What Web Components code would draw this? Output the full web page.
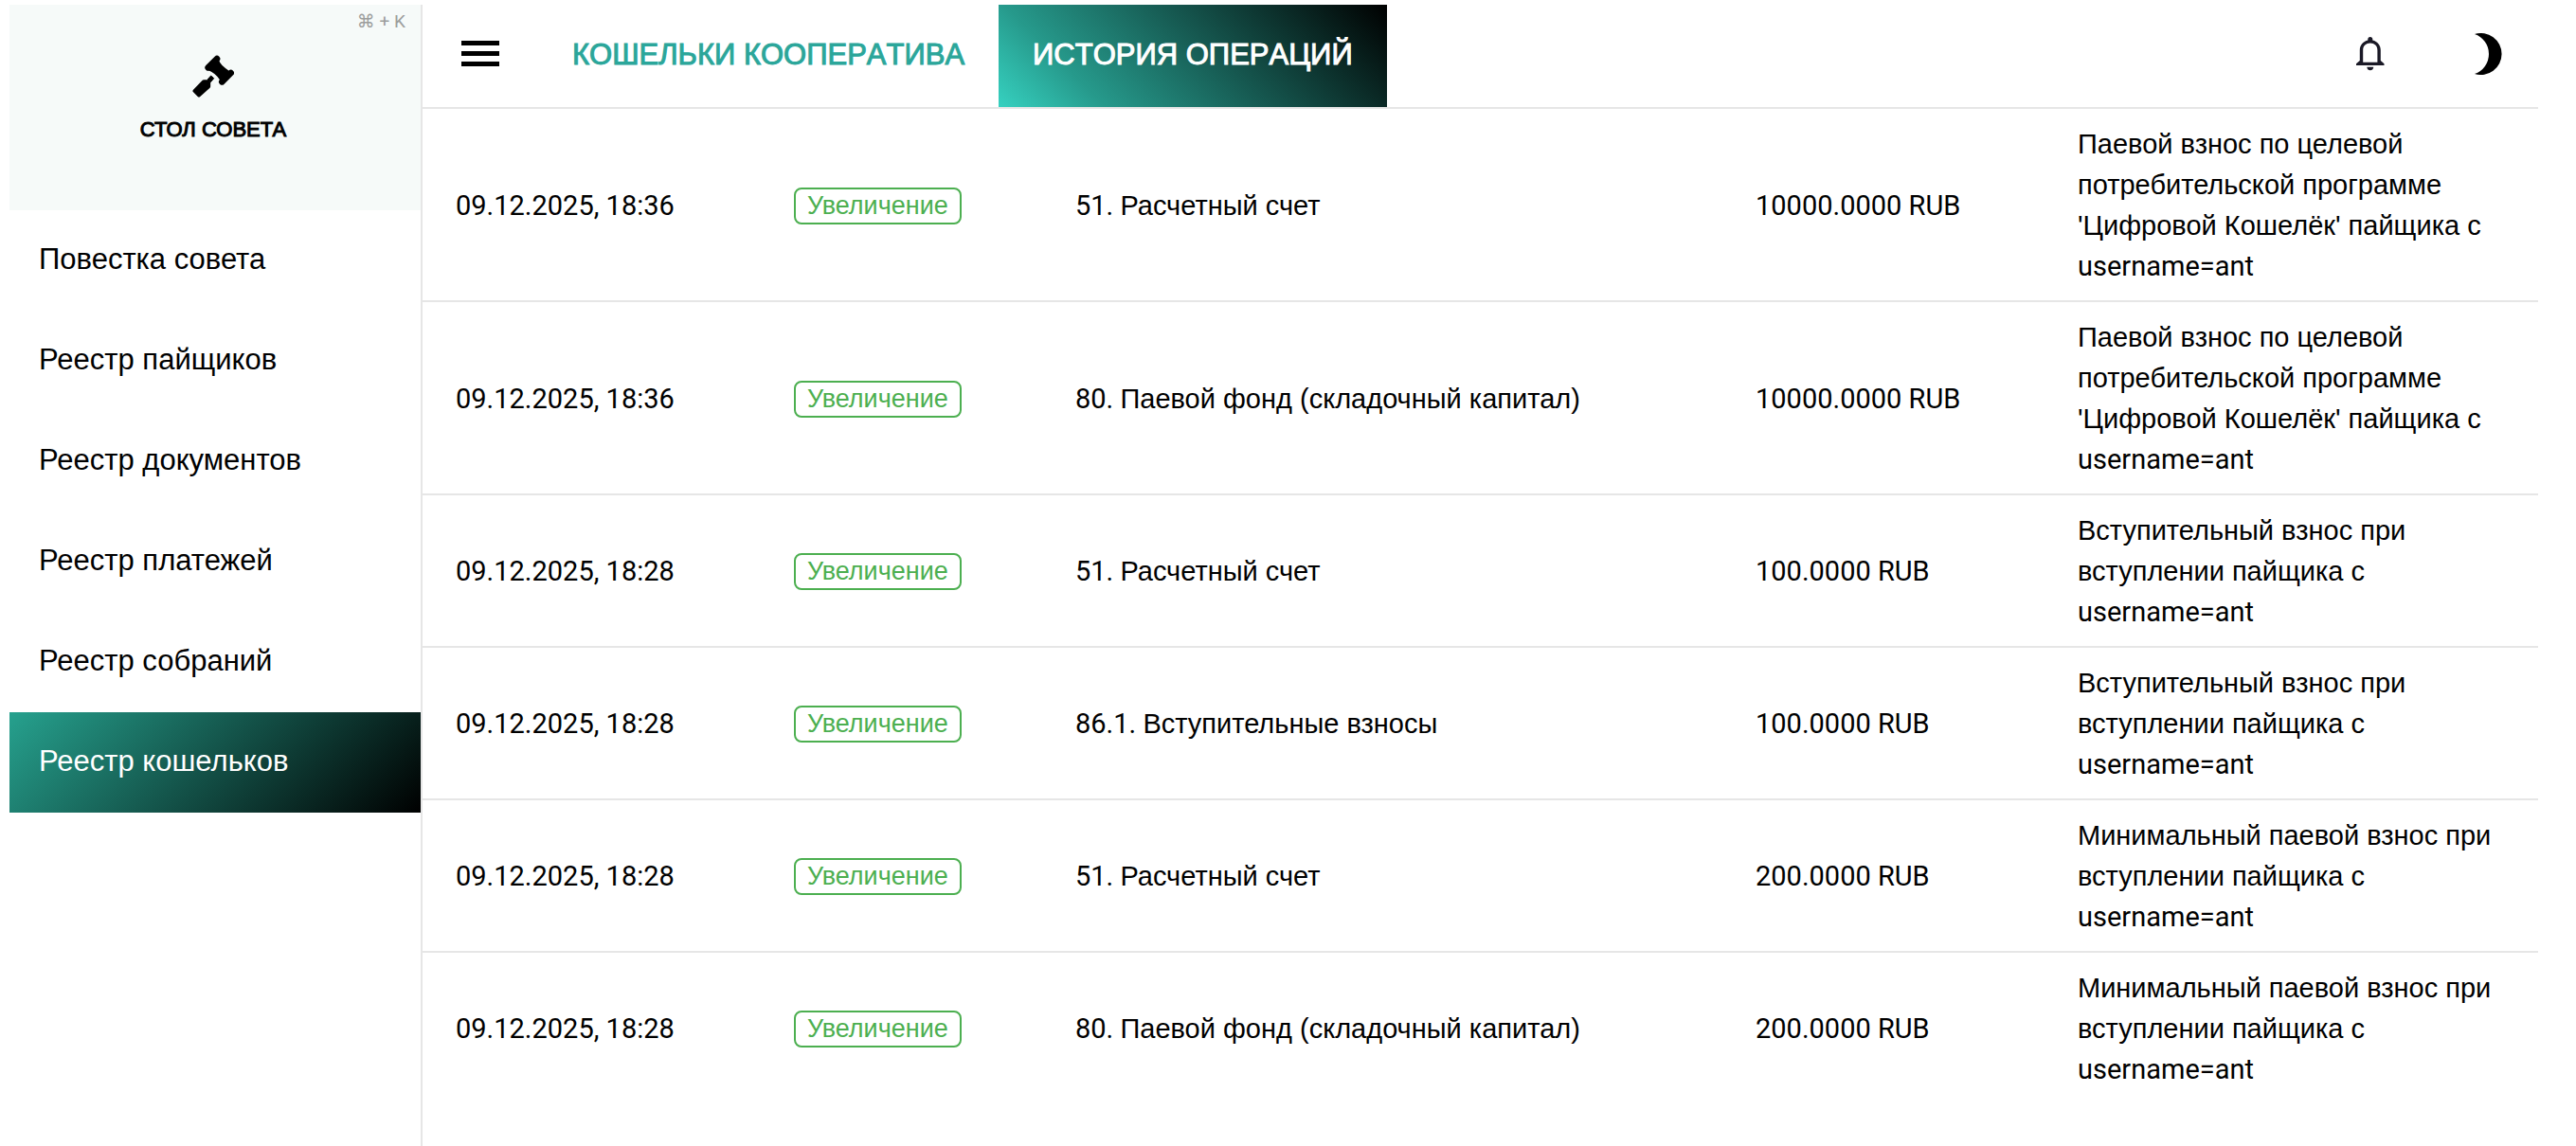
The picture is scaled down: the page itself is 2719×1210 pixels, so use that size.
<!DOCTYPE html>
<html lang="ru">
<head>
<meta charset="utf-8">
<title>История операций</title>
<style>
  body { margin: 0; background: #fff; color: #000; font-family: "Liberation Sans", Arial, sans-serif; }
</style>
</head>
<body>
<app-shell>
  <side-nav slot="side">
    <nav-item>Повестка совета</nav-item>
    <nav-item>Реестр пайщиков</nav-item>
    <nav-item>Реестр документов</nav-item>
    <nav-item>Реестр платежей</nav-item>
    <nav-item>Реестр собраний</nav-item>
    <nav-item active>Реестр кошельков</nav-item>
  </side-nav>
  <top-bar slot="bar">
    <tab-link>КОШЕЛЬКИ КООПЕРАТИВА</tab-link>
    <tab-link active>ИСТОРИЯ ОПЕРАЦИЙ</tab-link>
  </top-bar>
  <operations-table></operations-table>
</app-shell>
<script>
const define = (name, html, setup) => customElements.define(name, class extends HTMLElement {
  connectedCallback() {
    if (this.shadowRoot) return;
    this.attachShadow({ mode: 'open' }).innerHTML = html;
    if (setup) setup(this.shadowRoot, this);
  }
});

define('app-shell', `
<style>
  :host { display: flex; min-height: 100vh; box-sizing: border-box; padding: 5px 40px 0 10px; }
  .side { flex: none; width: 434px; border-right: 2px solid #e6e6e6; }
  .main { flex: 1; min-width: 0; }
</style>
<div class="side"><slot name="side"></slot></div>
<div class="main"><slot name="bar"></slot><main><slot></slot></main></div>`);

define('side-nav', `
<style>
  :host { display: block; }
  .desk { position: relative; display: flex; flex-direction: column; align-items: center; gap: 16px;
    width: 100%; height: 217px; padding: 53px 4px 0 0; border: 0; box-sizing: border-box;
    background: #f6faf9; color: #000; font: 22px/34px "Liberation Sans", Arial, sans-serif; -webkit-text-stroke: 1px; }
  .desk svg { width: 44px; height: 46px; }
  kbd { position: absolute; top: 8px; right: 16px; color: #9c9e9d; font: 19px/20px Roboto, "DejaVu Sans", sans-serif; -webkit-text-stroke: 0; }
</style>
<button class="desk" type="button">
  <svg viewBox="38 40 132 138" aria-hidden="true">
    <path d="M116 52L88 80M160 97L132 125" fill="none" stroke="#000" stroke-width="20" stroke-linecap="round"/>
    <path d="M112 50L122 56Q126 72 154 90L160 100L134 124L126 120Q112 98 88 88L84 80z"/>
    <path d="M97 106L106 114L96 126L86 118z" stroke="#000" stroke-width="3" stroke-linejoin="round"/>
    <path d="M74 124H86L90 128V140L59 168L45 154z" stroke="#000" stroke-width="11" stroke-linejoin="round"/>
  </svg>
  <span>СТОЛ СОВЕТА</span>
  <kbd>⌘ + K</kbd>
</button>
<nav><slot></slot></nav>`);

define('nav-item', `
<style>
  :host { display: block; }
  a { display: flex; align-items: center; box-sizing: border-box; height: 106px; padding: 0 31px 2px; color: #000; text-decoration: none; font-size: 31px; line-height: 40px; }
  :host([active]) a { color: #fff; background: linear-gradient(135deg, #26a18e, #000); }
</style>
<a href="#"><slot></slot></a>`);

define('top-bar', `
<style>
  :host { display: flex; align-items: stretch; height: 108px; border-bottom: 2px solid #e6e6e6; }
  button { display: flex; align-items: center; justify-content: center; border: 0; padding: 0 0 4px; background: none; color: #000; }
  .menu { width: 122px; }
  nav { display: flex; margin-right: auto; }
  .icon { width: 106px; }
  .icon + .icon { margin-left: 18px; }
  svg { display: block; }
</style>
<button class="menu" type="button" aria-label="Меню">
  <svg width="40" height="28" viewBox="0 0 40 28"><path d="M0 0h40v5H0zM0 11h40v5H0zM0 22h40v5H0z"/></svg>
</button>
<nav><slot></slot></nav>
<button class="icon" type="button" aria-label="Уведомления">
  <svg width="30" height="36" viewBox="0 0 30 36"><path fill="#1a1926" fill-rule="evenodd" d="M12.300 3.400V2.500a2.500 2.500 0 0 1 5 0V3.400C22.500 4.600 25.800 8.500 25.800 14V25L29.500 28.300V30H0V28.300L3.800 25V14C3.800 8.500 7.200 4.600 12.300 3.400zM7.200 26.700H22.400V14C22.400 9.500 19.200 6.600 14.800 6.600S7.200 9.500 7.200 14zM11.300 31.800H18.300C18 36.500 11.600 36.500 11.300 31.800z"/></svg>
</button>
<button class="icon" type="button" aria-label="Тёмная тема">
  <svg width="29" height="44" viewBox="0 0 29 44"><path d="M0 1A22 22 0 1 1 0 43A22.200 22.200 0 0 0 0 1z"/></svg>
</button>`);

define('tab-link', `
<style>
  :host { display: flex; }
  a { display: flex; align-items: center; padding: 0 36px 3px; color: #2ba69a; text-decoration: none; font-size: 31px; line-height: 40px; font-kerning: none; -webkit-text-stroke: 1px; }
  :host([active]) a { color: #fff; background: linear-gradient(45deg, #36d1c0, #26998b 22%, #000); }
</style>
<a href="#"><slot></slot></a>`);

define('status-badge', `
<style>
  :host { display: block; width: fit-content; box-sizing: border-box; border: 2px solid #4caf50; border-radius: 8px; padding: 0 12px; color: #4caf50; font-size: 27px; line-height: 35px; }
</style>
<slot></slot>`);

const operations = [
  ['09.12.2025, 18:36', '51. Расчетный счет', '10000.0000 RUB', "Паевой взнос по целевой потребительской программе 'Цифровой Кошелёк' пайщика с username=ant"],
  ['09.12.2025, 18:36', '80. Паевой фонд (складочный капитал)', '10000.0000 RUB', "Паевой взнос по целевой потребительской программе 'Цифровой Кошелёк' пайщика с username=ant"],
  ['09.12.2025, 18:28', '51. Расчетный счет', '100.0000 RUB', 'Вступительный взнос при вступлении пайщика с username=ant'],
  ['09.12.2025, 18:28', '86.1. Вступительные взносы', '100.0000 RUB', 'Вступительный взнос при вступлении пайщика с username=ant'],
  ['09.12.2025, 18:28', '51. Расчетный счет', '200.0000 RUB', 'Минимальный паевой взнос при вступлении пайщика с username=ant'],
  ['09.12.2025, 18:28', '80. Паевой фонд (складочный капитал)', '200.0000 RUB', 'Минимальный паевой взнос при вступлении пайщика с username=ant'],
];

define('operations-table', `
<style>
  :host { display: block; }
  table { width: 100%; table-layout: fixed; border-collapse: separate; border-spacing: 0; font-size: 29px; line-height: 43px; }
  .date { width: 357px; } .kind { width: 297px; } .sum { width: 340px; } .note { width: 521px; }
  td { box-sizing: border-box; padding: 16px 35px 14px; border-bottom: 2px solid #e6e6e6; vertical-align: middle; }
  tr:last-child td { border-bottom: 0; }
  .latin { font-family: Roboto, sans-serif; line-height: 1; }
</style>
<table aria-label="История операций">
  <colgroup><col class="date"><col class="kind"><col><col class="sum"><col class="note"></colgroup>
  <tbody></tbody>
</table>`, root => {
  // Latin letters and digits are set in Roboto, Cyrillic in the page font
  const mix = text => text.replace(/[A-Za-z0-9][A-Za-z0-9.,:= ]*/g, run => `<span class="latin">${run}</span>`);
  root.querySelector('tbody').innerHTML = operations.map(([date, account, sum, note]) =>
    `<tr><td>${mix(date)}</td><td><status-badge>Увеличение</status-badge></td><td>${mix(account)}</td><td>${mix(sum)}</td><td>${mix(note)}</td></tr>`).join('');
});
</script>
</body>
</html>
